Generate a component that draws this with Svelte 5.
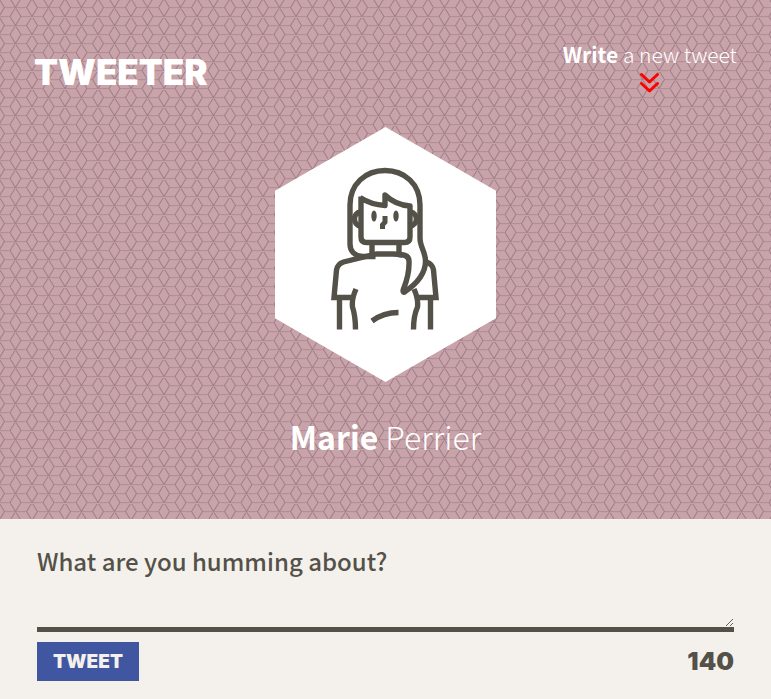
<script>
  let text = $state('');
  let left = $derived(140 - text.length);
</script>

<header>
  <nav>
    <a class="brand" href="#top">TWEETER</a>
    <a class="compose" href="#tweet-text">
      <span><b>Write</b> a new tweet</span>
      <svg width="20" height="22" viewBox="0 0 20 22" aria-hidden="true">
        <path d="M1.500 2.500 9.500 10 17.500 2.500M1.500 11.500 9.500 19 17.500 11.500" fill="none" stroke="#f00" stroke-width="3" stroke-linecap="round" stroke-linejoin="round" />
      </svg>
    </a>
  </nav>
  <section class="profile">
    <svg class="avatar" width="221" height="255" viewBox="0 0 221 255" role="img" aria-label="Marie Perrier">
      <path d="M110.500 0 221 63.700V191.300L110.500 255 0 191.300V63.700Z" fill="#fff" />
      <g transform="translate(45.500 33)" fill="none" stroke="#545149" stroke-width="5.400">
        <path d="M55 96.500H42C34 96 29.500 91 29.500 84V45C29.500 24 45 10.500 64.500 10.500S99.500 24 99.500 45V78C99.500 87 105 92 105 101C105 114 96 124 84 132C83 133 82 131 83 129C87 119 89 112 88.500 101C88.500 97 85 94.500 78 94.500" />
        <path d="M39.500 37.500C48 43 55 45 64.500 45.500V35C72 42 80 45.500 89.500 46V77Q89.500 82.500 84 82.500H46Q40.500 82.500 40.500 77V36.500" stroke-linejoin="round" />
        <path d="M40 52C32 53 32 65 40 66M89.500 52C98 53 98 65 89.500 66M51.500 83V94M78.500 83V94" />
        <path d="M82 95Q77 94 72 94H56L23 102Q17 104 16 110L13.500 137.500H34M106 102Q112 104 113 110L115.500 137.500H95M19 138V169.500M110 138V169.500M35.500 129Q31 139 32 147Q35 156 35 169.500M93.500 129Q98 139 97 147Q93 156 93 169.500M51.500 161Q63 152.500 78 152.500" />
        <path d="M64.500 56V62L62 65V69" stroke-width="5" />
        <g fill="#545149" stroke="none"><ellipse cx="53.500" cy="56" rx="2.700" ry="5.500" /><ellipse cx="75.500" cy="56" rx="2.700" ry="5.500" /></g>
      </g>
    </svg>
    <h1><b>Marie</b> Perrier</h1>
  </section>
</header>
<main>
  <form onsubmit={(event) => event.preventDefault()}>
    <label for="tweet-text">What are you humming about?</label>
    <textarea id="tweet-text" bind:value={text}></textarea>
    <div class="actions">
      <button type="submit">TWEET</button>
      <output for="tweet-text">{left}</output>
    </div>
  </form>
</main>

<style>
  :global(body) { background: #f4f1ec; font-family: "Noto Sans CJK JP", "Noto Sans", sans-serif; color: #545149; }
  header {
    background: #c9a3aa url("data:image/svg+xml,%3Csvg xmlns='http://www.w3.org/2000/svg' width='33' height='18'%3E%3Cg fill='none'%3E%3Cpath d='M4.500 7.500H26.500M21 16.500H33M0 16.500H9.500' stroke='%23b08f96'/%3E%3Cpath d='M15 8.500 10 16.500 11 18M16 8.500 21 16.500 20 18M10 -1.500 15.500 7.500 21 -1.500M31.500-.5 26.500 7.500 32 16.500 37.500 7.500 32.500-.5M-1.500-.5-6.500 7.500-1 16.500 4.500 7.500-.5-.5' stroke='%23a18088' stroke-width='1.100'/%3E%3Cpath d='M6 8.500H13M18 8.500H25M23 17.500H30M0 17.500H8' stroke='%23c59fa6'/%3E%3C/g%3E%3C/svg%3E");
    color: #fff;
    padding: 38px 34px 59px;
  }
  nav { display: flex; justify-content: space-between; align-items: flex-start; }
  a { color: inherit; text-decoration: none; }
  .brand { font: 900 35px/40px Inter, sans-serif; margin-top: 14px; }
  .compose { display: flex; flex-direction: column; align-items: center; gap: 2px; font-size: 21px; line-height: 32px; font-weight: 300; }
  .profile { display: flex; flex-direction: column; align-items: center; padding-top: 33px; }
  h1 { font-size: 32px; line-height: 48px; font-weight: 300; margin: 30px 0 0; }
  b { font-weight: 700; }
  main { padding: 26px 37px 18px; }
  form { display: flex; flex-direction: column; }
  label { font-size: 24px; line-height: 32px; font-weight: 500; }
  textarea { height: 55px; box-sizing: border-box; border: 0; border-bottom: 5px solid #545149; background: transparent; resize: vertical; font: inherit; color: inherit; padding: 0; }
  .actions { display: flex; justify-content: space-between; align-items: center; margin-top: 10px; }
  button { border: 0; background: #4056a1; color: #f4f1ec; padding: 0 16px; font: 900 19px/39px Inter, sans-serif; }
  output { font: 900 25px/39px Inter, sans-serif; }
</style>
